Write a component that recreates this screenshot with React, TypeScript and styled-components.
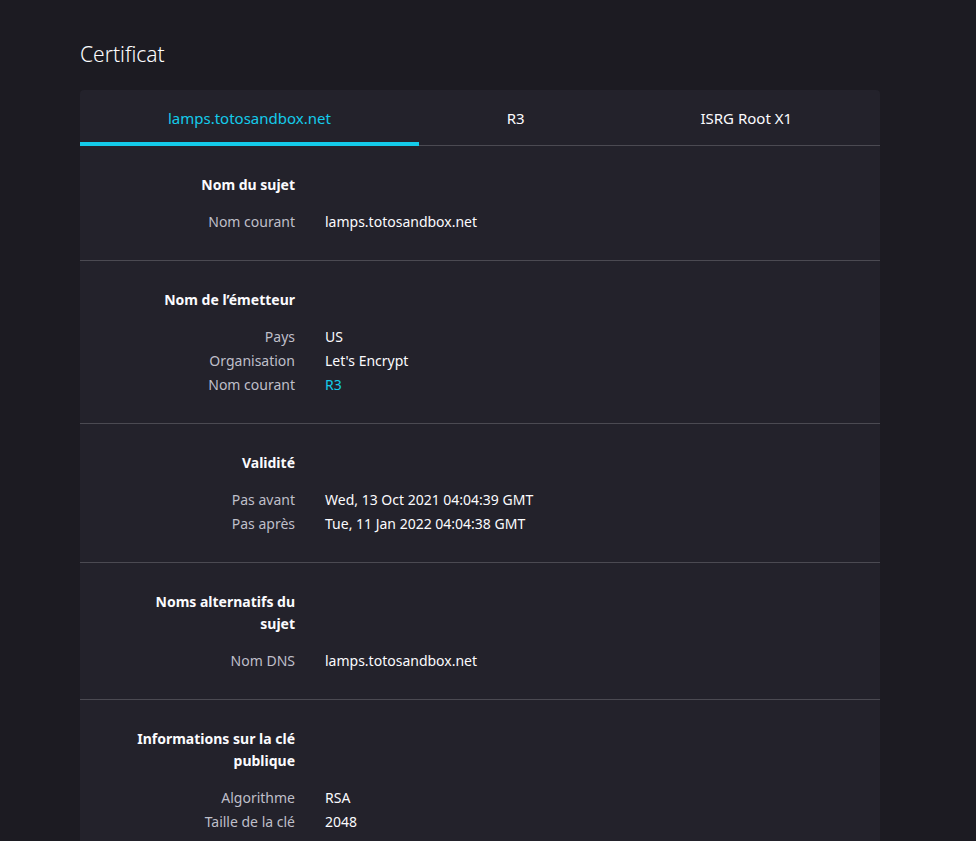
import React, { useState } from 'react';
import styled, { createGlobalStyle } from 'styled-components';

// Certificate data shown in the sections
interface ICertRow {
  label: string;
  value: string;
  link?: boolean;
}

interface ICertSection {
  title: string;
  rows: ICertRow[];
}

const tabs = ['lamps.totosandbox.net', 'R3', 'ISRG Root X1'];

const sections: ICertSection[] = [
  {
    title: 'Nom du sujet',
    rows: [{ label: 'Nom courant', value: 'lamps.totosandbox.net' }],
  },
  {
    title: 'Nom de l’émetteur',
    rows: [
      { label: 'Pays', value: 'US' },
      { label: 'Organisation', value: "Let's Encrypt" },
      { label: 'Nom courant', value: 'R3', link: true },
    ],
  },
  {
    title: 'Validité',
    rows: [
      { label: 'Pas avant', value: 'Wed, 13 Oct 2021 04:04:39 GMT' },
      { label: 'Pas après', value: 'Tue, 11 Jan 2022 04:04:38 GMT' },
    ],
  },
  {
    title: 'Noms alternatifs du sujet',
    rows: [{ label: 'Nom DNS', value: 'lamps.totosandbox.net' }],
  },
  {
    title: 'Informations sur la clé publique',
    rows: [
      { label: 'Algorithme', value: 'RSA' },
      { label: 'Taille de la clé', value: '2048' },
      { label: 'Exposant', value: '65537' },
    ],
  },
];

const GlobalStyle = createGlobalStyle`
  html, body {
    margin: 0;
    background: #1c1b22;
    color: #fbfbfe;
    font-family: "Noto Sans", "Open Sans", sans-serif;
  }
`;

const Page = styled.main`
  width: 800px;
  padding: 39px 0 0 80px;
`;

const Title = styled.h1`
  margin: 0 0 21px;
  font-size: 21px;
  line-height: 30px;
  font-weight: 300;
  color: #fbfbfe;
`;

const Card = styled.section`
  background: #23222b;
  border-radius: 4px 4px 0 0;
`;

const TabBar = styled.div`
  display: flex;
  border-bottom: 1px solid #4b4a52;
`;

const Tab = styled.button<{ $active: boolean }>`
  flex: 1 1 auto;
  height: 56px;
  padding: 4px 0 0;
  margin-bottom: -1px;
  background: none;
  border: none;
  border-bottom: 4px solid ${(p) => (p.$active ? '#14cbea' : 'transparent')};
  color: ${(p) => (p.$active ? '#14cbea' : '#fbfbfe')};
  font-family: inherit;
  font-size: 15px;
  cursor: pointer;
`;

const Section = styled.div`
  display: grid;
  grid-template-columns: 165px 1fr;
  column-gap: 30px;
  padding: 28px 0 26px 50px;
  border-bottom: 1px solid #4b4a52;
`;

const Heading = styled.h2`
  grid-column: 1;
  margin: 0 0 14px;
  text-align: right;
  font-size: 14px;
  line-height: 22px;
  font-weight: 700;
`;

const Label = styled.span`
  grid-column: 1;
  text-align: right;
  font-size: 14px;
  line-height: 24px;
  color: #bfbfc9;
`;

const Value = styled.span<{ $link?: boolean }>`
  grid-column: 2;
  font-size: 14px;
  line-height: 24px;
  color: ${(p) => (p.$link ? '#14cbea' : '#fbfbfe')};
`;

const App: React.FC = () => {
  const [activeTab, setActiveTab] = useState(0);

  return (
    <Page>
      <GlobalStyle />
      <Title>Certificat</Title>
      <Card>
        <TabBar>
          {tabs.map((tab, i) => (
            <Tab key={tab} $active={i === activeTab} onClick={() => setActiveTab(i)}>
              {tab}
            </Tab>
          ))}
        </TabBar>
        {sections.map((section) => (
          <Section key={section.title}>
            <Heading>{section.title}</Heading>
            {section.rows.map((row) => (
              <React.Fragment key={row.label}>
                <Label>{row.label}</Label>
                <Value $link={row.link}>{row.value}</Value>
              </React.Fragment>
            ))}
          </Section>
        ))}
      </Card>
    </Page>
  );
};

export default App;
